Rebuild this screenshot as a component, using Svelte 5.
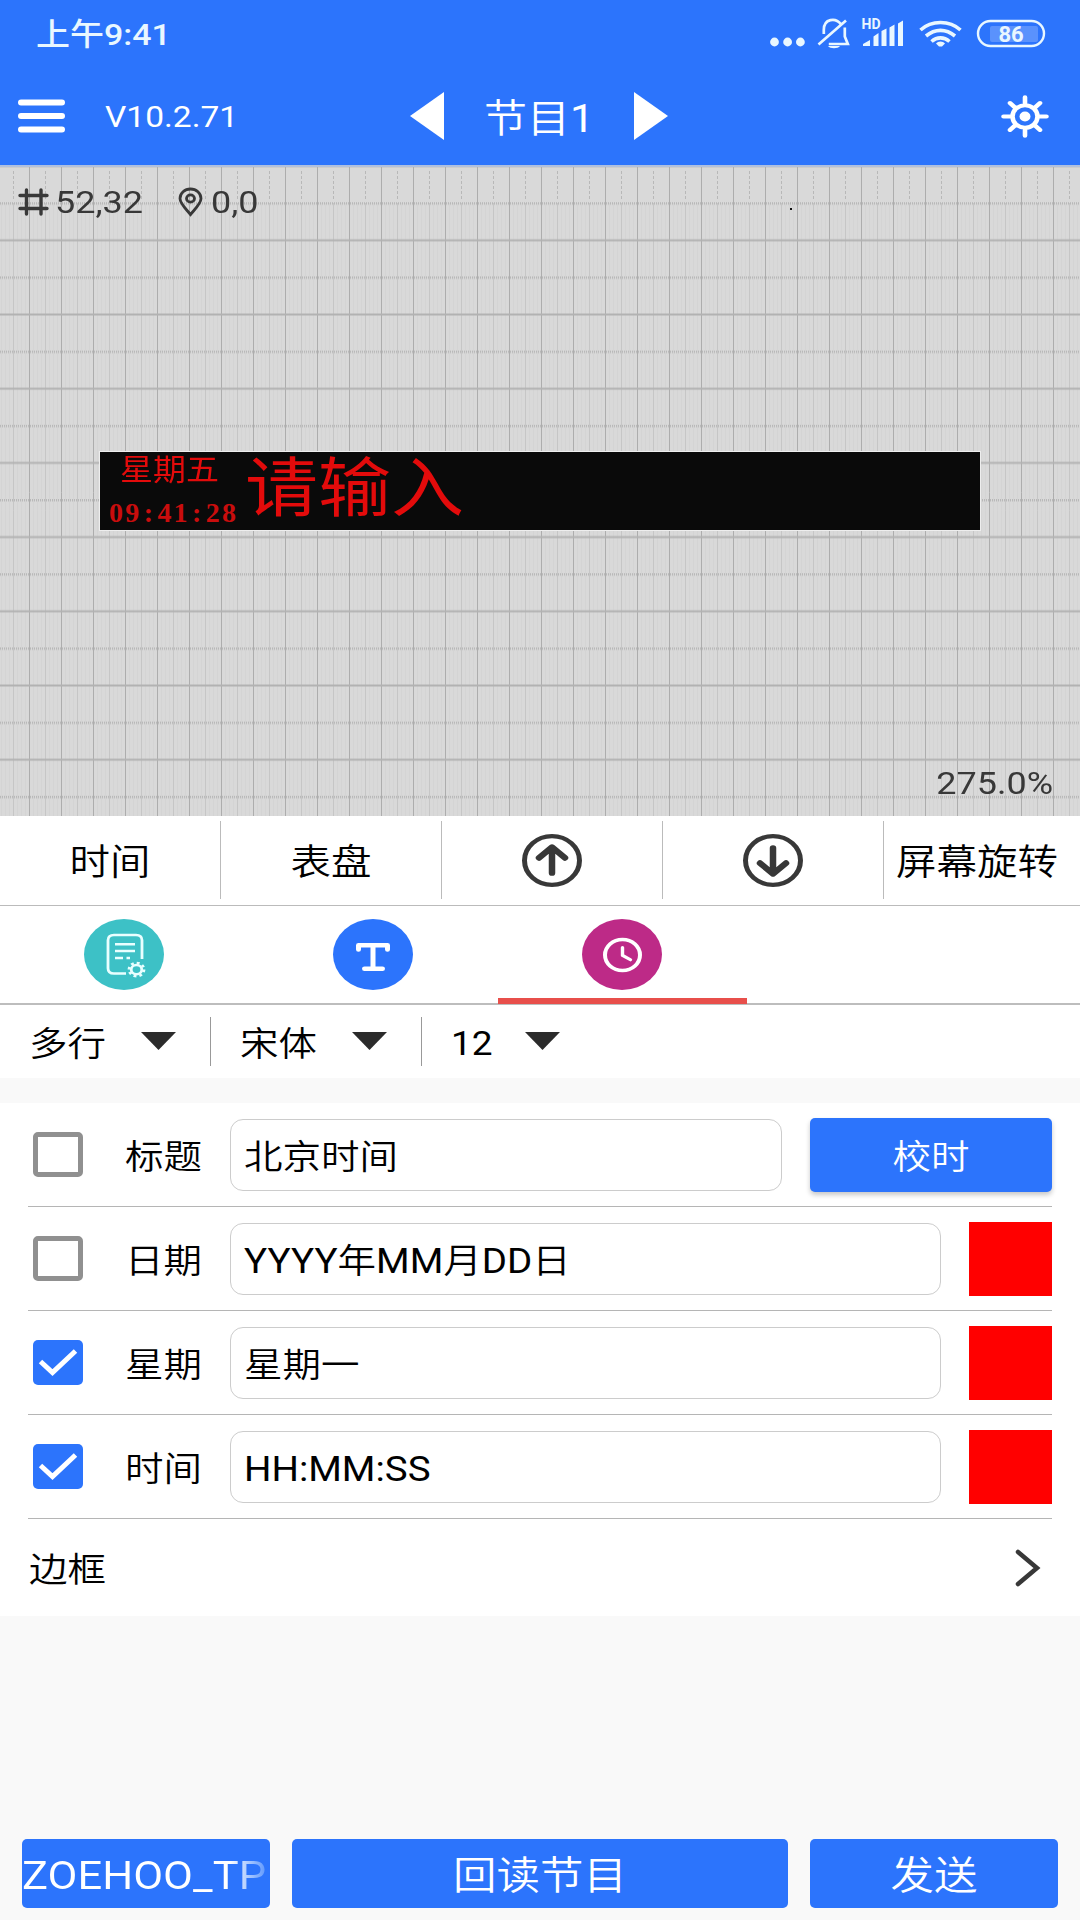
<script lang="ts">
	interface ClockRow {
		label: string;
		value: string;
		checked: boolean;
		color?: string;
	}

	const version = 'V10.2.71';
	const clock = '09:41:28';

	let programIndex = $state(1);
	let activeTab = $state('clock');

	let rows: ClockRow[] = $state([
		{ label: '标题', value: '北京时间', checked: false },
		{ label: '日期', value: 'YYYY年MM月DD日', checked: false, color: '#ff0000' },
		{ label: '星期', value: '星期一', checked: true, color: '#ff0000' },
		{ label: '时间', value: 'HH:MM:SS', checked: true, color: '#ff0000' }
	]);

	const selects = ['多行', '宋体', '12'];

	const tabs = ['program', 'text', 'clock'];

	// separates latin runs, which are set a little heavier than the hanzi
	function splitLatin(value: string) {
		return value.split(/([A-Z:]+)/).filter((part) => part !== '');
	}

	function isLatin(part: string) {
		return /^[A-Z:]+$/.test(part);
	}

	function previousProgram() {
		if (programIndex > 1) programIndex -= 1;
	}

	function nextProgram() {
		programIndex += 1;
	}
</script>

<div class="app">
	<header>
		<div class="status-bar">
			<span class="status-time"><span class="text">上午9:41</span></span>
			<svg class="status-icons" viewBox="770 14 280 38" fill="none" stroke="#e9f7ff">
				<g fill="#e9f7ff" stroke="none">
					<circle cx="774.5" cy="42" r="4.4" />
					<circle cx="787.6" cy="42" r="4.4" />
					<circle cx="800.4" cy="42" r="4.4" />
					<path d="M828 46h12c-2 3-10 3-12 0z" />
					<path d="M863 46v-2l7-4v6zM873.500 46v-9.500l5-3.500v13zM881.500 46v-15l5-2.500v17.500zM889.500 46v-18.500l5-3v21.500zM898 46v-22.500l5-3v25.500z" />
					<path d="M936 43.500c2-2.700 7-2.700 9 0l-3 3h-3z" />
				</g>
				<path d="M823.800 34v-4c0-12 12-12.500 17-6M844.800 27.500v9l3 7.500h-19M818.500 44.500l27.500-24" stroke-width="2.700" />
				<path d="M920.500 30c11-10 29-10 40 0M926 36c9-7.500 20-7.500 29 0M931.500 41.500c5.500-4.800 12.500-4.800 18 0" stroke-width="3.600" />
				<rect x="978" y="21" width="66" height="25" rx="12.500" stroke-width="2.400" />
				<rect x="990" y="26" width="48" height="16" rx="2" fill="#5a92fd" stroke="none" />
				<text x="861.500" y="29" class="hd">HD</text>
				<text x="998.500" y="42" class="battery">86</text>
			</svg>
		</div>
		<div class="title-bar">
			<button class="menu" aria-label="menu">
				<svg width="48" height="34" viewBox="0 0 48 34" stroke="#fff" stroke-width="6" stroke-linecap="round">
					<path d="M3 3.500h41M3 17h41M3 30.500h41" />
				</svg>
			</button>
			<span class="version"><span class="text">{version}</span></span>
			<div class="program-nav">
				<button onclick={previousProgram} aria-label="previous">
					<svg width="34" height="48" viewBox="0 0 34 48"><path d="M34 0v48L0 24z" fill="#fff" /></svg>
				</button>
				<span class="text program-name">节目<span class="latin">{programIndex}</span></span>
				<button onclick={nextProgram} aria-label="next">
					<svg width="34" height="48" viewBox="0 0 34 48"><path d="M0 0v48l34-24z" fill="#fff" /></svg>
				</button>
			</div>
			<button class="settings" aria-label="settings">
				<svg width="48" height="43" viewBox="-24 -24 48 48" preserveAspectRatio="none" fill="none" stroke="#fff" stroke-width="4.600" stroke-linecap="round">
					<circle r="12.500" />
					<circle r="5.500" fill="#fff" stroke="none" />
					<path d="M0-15v-6.500M0 15v6.500M-15 0h-6.500M15 0h6.500M-10-10l-5-5M10-10l5-5M-10 10l-5 5M10 10l5 5" />
				</svg>
			</button>
		</div>
	</header>

	<section class="canvas">
		<svg class="grid" width="1080" height="651" aria-hidden="true">
			<defs>
				<pattern id="columns" x="13" width="32" height="651" patternUnits="userSpaceOnUse">
					<path d="M.5 4v30" stroke="#b8b8b8" stroke-dasharray="3 2" />
					<path d="M.5 36v615" stroke="#c6c6c6" />
					<path d="M16.500 0v651" stroke="#adadad" />
					<path d="M4.500 36v615M8.500 36v615M12.500 36v615M20.500 36v615M24.500 36v615M28.500 36v615" stroke="#d4d4d4" />
				</pattern>
				<pattern id="lines" y="35.200" width="4" height="74.200" patternUnits="userSpaceOnUse">
					<path d="M0 1.200h4" stroke="#b8b8b8" stroke-width="2.400" stroke-dasharray="1 1" />
					<path d="M0 38.100h4" stroke="#b2b2b2" stroke-width="2" />
				</pattern>
			</defs>
			<rect width="1080" height="651" fill="#d9d9d9" />
			<rect width="1080" height="651" fill="url(#columns)" />
			<rect width="1080" height="651" fill="url(#lines)" />
			<rect x="790" y="41" width="2" height="2" fill="#111" />
		</svg>
		<div class="canvas-info">
			<svg width="31" height="28" viewBox="0 0 31 28" fill="none" stroke="#383838" stroke-width="3.400" stroke-linecap="round">
				<path d="M8.500 2v24M23 2v24M2 7.500h27M2 20.500h27" />
			</svg>
			<span class="text size">52,32</span>
			<svg class="pin" width="25" height="30" viewBox="0 0 25 30" fill="none" stroke="#383838" stroke-width="2.800">
				<path d="M12.500 27.500C8 22 2 16.500 2 11.500a10.500 9.500 0 0 1 21 0c0 5-6 10.500-10.500 16z" />
				<ellipse cx="12.500" cy="11.500" rx="4" ry="3.600" />
			</svg>
			<span class="text">0,0</span>
		</div>
		<div class="led">
			<div class="led-clock">
				<span class="text weekday">星期五</span>
				<span class="digits">{#each clock as char}<span>{char}</span>{/each}</span>
			</div>
			<span class="text led-text">请输入</span>
		</div>
		<div class="zoom"><span class="text">275.0%</span></div>
	</section>

	<nav class="toolbar">
		<button><span class="text">时间</span></button>
		<button><span class="text">表盘</span></button>
		<button aria-label="up">
			<svg width="62" height="55" viewBox="-31 -31 62 62" preserveAspectRatio="none" fill="none" stroke="#383838">
				<circle r="27.500" stroke-width="5" />
				<path d="M0 14v-28M-13-3l13-12 13 12" stroke-width="6.500" stroke-linecap="round" stroke-linejoin="round" />
			</svg>
		</button>
		<button aria-label="down">
			<svg width="62" height="55" viewBox="-31 -31 62 62" preserveAspectRatio="none" fill="none" stroke="#383838">
				<circle r="27.500" stroke-width="5" />
				<path d="M0-14v28M-13 3l13 12 13-12" stroke-width="6.500" stroke-linecap="round" stroke-linejoin="round" />
			</svg>
		</button>
		<button class="rotate"><span class="text">屏幕旋转</span></button>
	</nav>

	<div class="tabs">
		{#each tabs as tab}
			<button class="tab" class:active={activeTab === tab} onclick={() => (activeTab = tab)} aria-label={tab}>
				<svg width="80" height="71" viewBox="0 0 80 80" preserveAspectRatio="none" fill="none" stroke="#fff" stroke-linecap="round" stroke-linejoin="round">
					{#if tab === 'program'}
						<circle cx="40" cy="40" r="40" fill="#3dc1c6" stroke="none" />
						<g stroke="#e9ffff" stroke-width="2.800" stroke-linecap="butt">
							<path d="M42 61.500H30q-6 0-6-6V24q0-6 6-6h22q6 0 6 6v21" />
							<path d="M31 28.500h20M31 36h20M31 44h8M42.500 44h3.500" />
							<circle cx="52.500" cy="57" r="5.300" />
							<circle cx="52.500" cy="57" r="7.500" stroke-dasharray="2.900 2.990" />
						</g>
					{:else if tab === 'text'}
						<circle cx="40" cy="40" r="40" fill="#2c74fc" stroke="none" />
						<path d="M25.500 34.500V29.500h29v5M40 30v26M31.500 56h18" stroke-width="5" />
					{:else}
						<circle cx="40" cy="40" r="40" fill="#bd2a87" stroke="none" />
						<circle cx="40.500" cy="40.500" r="17.500" stroke-width="4" />
						<path d="M40.500 32v9l8 5" stroke-width="3.400" />
					{/if}
				</svg>
			</button>
		{/each}
	</div>

	<div class="format-row">
		{#each selects as select}
			<button class="select">
				<span class="text">{select}</span>
				<svg width="35" height="18" viewBox="0 0 35 18"><path d="M0 0h35L17.500 18z" fill="#2b2b2b" /></svg>
			</button>
		{/each}
	</div>

	<section class="settings-list">
		{#each rows as row}
			<div class="row">
				<button
					class="checkbox"
					class:checked={row.checked}
					onclick={() => (row.checked = !row.checked)}
					aria-label={row.label}
				>
					{#if row.checked}
						<svg width="50" height="45" viewBox="0 0 50 45" fill="none" stroke="#fff" stroke-width="5">
							<path d="M7.500 21.500l12 11 23-21.500" />
						</svg>
					{/if}
				</button>
				<span class="label"><span class="text">{row.label}</span></span>
				<div class="field">
					<span class="text">{#each splitLatin(row.value) as part}<span class:latin={isLatin(part)}>{part}</span>{/each}</span>
				</div>
				{#if row.color}
					<span class="swatch" style="background: {row.color}"></span>
				{:else}
					<button class="primary sync"><span class="text">校时</span></button>
				{/if}
			</div>
		{/each}
		<div class="row link">
			<span class="text">边框</span>
			<svg width="26" height="38" viewBox="0 0 26 38" fill="none" stroke="#383838" stroke-width="4.500" stroke-linecap="round">
				<path d="M3 3L22 19 3 35" />
			</svg>
		</div>
	</section>

	<footer>
		<button class="primary device"><span class="text">ZOEHOO_TP</span></button>
		<button class="primary readback"><span class="text">回读节目</span></button>
		<button class="primary send"><span class="text">发送</span></button>
	</footer>
</div>

<style>
	:global(body) {
		margin: 0;
	}

	.app {
		--drop: 3px;
		display: flex;
		flex-direction: column;
		width: 1080px;
		height: 1920px;
		overflow: hidden;
		background: #f9f9f9;
		color: #000;
		font-family: Roboto, 'Noto Sans CJK SC', sans-serif;
		font-weight: 350;
		font-size: 38.500px;
		line-height: 1;
	}

	button {
		display: flex;
		align-items: center;
		justify-content: center;
		padding: 0;
		border: 0;
		background: none;
		color: inherit;
		font: inherit;
		cursor: pointer;
	}

	svg {
		display: block;
		flex: none;
	}

	/* wide, slightly flattened lettering */
	.text {
		display: inline-block;
		white-space: nowrap;
		transform: translateY(var(--drop)) scaleY(0.89);
	}

	.latin {
		font-weight: 400;
	}

	header {
		--drop: 1px;
		box-sizing: border-box;
		height: 167px;
		background: #2c74fc;
		border-bottom: 2px solid #b0c0de;
		color: #fff;
	}

	.status-bar {
		display: flex;
		align-items: center;
		justify-content: space-between;
		height: 66px;
		padding: 0 30px 0 36px;
	}

	.status-time {
		color: #e9f7ff;
		font-size: 34px;
		font-weight: 500;
	}

	.status-icons {
		width: 280px;
		height: 38px;
	}

	.hd,
	.battery {
		fill: #e9f7ff;
		stroke: none;
		font-weight: 700;
		font-size: 14px;
	}

	.battery {
		font-size: 22px;
	}

	.title-bar {
		display: grid;
		grid-template-columns: 87px 305px 258px 1fr;
		align-items: center;
		height: 100px;
		padding: 0 31px 0 18px;
	}

	.menu {
		justify-content: flex-start;
	}

	.version {
		font-size: 33.500px;
		font-weight: 400;
	}

	.program-nav {
		display: flex;
		justify-content: space-between;
		align-items: center;
	}

	.program-name {
		--drop: 3px;
		font-size: 43px;
	}

	.settings {
		justify-self: end;
		padding-top: 1px;
	}

	.canvas {
		--drop: 0px;
		position: relative;
		height: 649px;
		overflow: hidden;
		color: #383838;
		font-size: 36px;
		font-weight: 400;
	}

	.grid {
		position: absolute;
		inset: 0;
	}

	.canvas-info {
		position: absolute;
		top: 17px;
		left: 18px;
		display: flex;
		align-items: center;
	}

	.size {
		margin-left: 6px;
	}

	.pin {
		margin: 0 8px 0 35px;
	}

	.led {
		position: absolute;
		top: 285px;
		left: 100px;
		display: flex;
		gap: 8px;
		width: 880px;
		height: 78px;
		background: #0a0a0a;
		color: #e30b0b;
		box-shadow: 0 0 0 1px #eee;
	}

	.led-clock {
		display: flex;
		flex-direction: column;
		width: 137px;
	}

	.weekday {
		padding: 0 0 0 20px;
		font-size: 33px;
		line-height: 36px;
	}

	.digits {
		display: flex;
		padding: 11px 0 0 8px;
		color: #c90d0d;
		font-family: 'Liberation Serif', serif;
		font-size: 28px;
		font-weight: 700;
	}

	.digits span {
		width: 16.400px;
		text-align: center;
	}

	.led-text {
		font-size: 73px;
		line-height: 73px;
	}

	.zoom {
		position: absolute;
		right: 27px;
		bottom: 15px;
	}

	.toolbar {
		box-sizing: border-box;
		display: grid;
		grid-template-columns: 221px 221px 221px 221px 1fr;
		height: 90px;
		padding: 5px 0 6px;
		border-bottom: 1px solid #bbb;
		background: #fff;
		font-size: 40.500px;
	}

	.toolbar button {
		border-right: 1px solid #bbb;
	}

	.toolbar button.rotate {
		padding-right: 10px;
		border: 0;
	}

	.tabs {
		box-sizing: border-box;
		display: flex;
		height: 99px;
		border-bottom: 2px solid #bdbdbd;
		background: #fff;
	}

	.tab {
		box-sizing: border-box;
		width: 249px;
		height: 98px;
		padding: 4px 1px 0 0;
		border-bottom: 6px solid transparent;
	}

	.tab.active {
		border-bottom-color: #e84f4b;
	}

	.format-row {
		display: flex;
		align-items: center;
		height: 73px;
		background: #fff;
	}

	.select {
		box-sizing: border-box;
		justify-content: space-between;
		height: 49px;
		width: 211px;
		padding: 0 34px 0 29px;
		border-right: 1px solid #999;
	}

	.select svg {
		margin-top: -2px;
	}

	.select:last-child {
		--drop: 2px;
		width: 172px;
		border: 0;
		font-size: 37px;
		font-weight: 400;
	}

	.settings-list {
		margin-top: 25px;
		padding: 0 28px;
		background: #fff;
	}

	.row {
		box-sizing: border-box;
		display: flex;
		align-items: center;
		height: 104px;
		border-bottom: 1px solid #b5b5b5;
	}

	.checkbox {
		box-sizing: border-box;
		width: 50px;
		height: 45px;
		margin-left: 5px;
		border: 5px solid #909090;
		border-radius: 5px;
	}

	.checkbox.checked {
		border: 0;
		background: #2c74fc;
	}

	.label {
		width: 105px;
		margin-left: 42px;
	}

	.field {
		box-sizing: border-box;
		display: flex;
		flex: 1;
		align-items: center;
		height: 72px;
		padding-left: 13px;
		border: 1px solid #ccc;
		border-radius: 13px;
	}

	.swatch {
		width: 83px;
		height: 74px;
		margin-left: 28px;
	}

	.primary {
		border-radius: 5px;
		background: #2c74fc;
		color: #fff;
	}

	.sync {
		width: 242px;
		height: 74px;
		margin-left: 28px;
		box-shadow: 0 3px 5px rgba(0, 0, 0, 0.22);
	}

	.link {
		justify-content: space-between;
		height: 97px;
		padding: 0 11px 0 1px;
		border: 0;
	}

	footer {
		--drop: 3px;
		display: grid;
		grid-template-columns: 248px 496px 248px;
		gap: 22px;
		margin-top: auto;
		padding: 0 22px 12px;
		font-size: 43.500px;
	}

	footer .primary {
		height: 69px;
	}

	.device {
		justify-content: flex-start;
		overflow: hidden;
		font-weight: 400;
	}

	.device .text {
		background: linear-gradient(90deg, #fff 85%, #5f98fd 100%);
		background-clip: text;
		color: transparent;
	}
</style>
